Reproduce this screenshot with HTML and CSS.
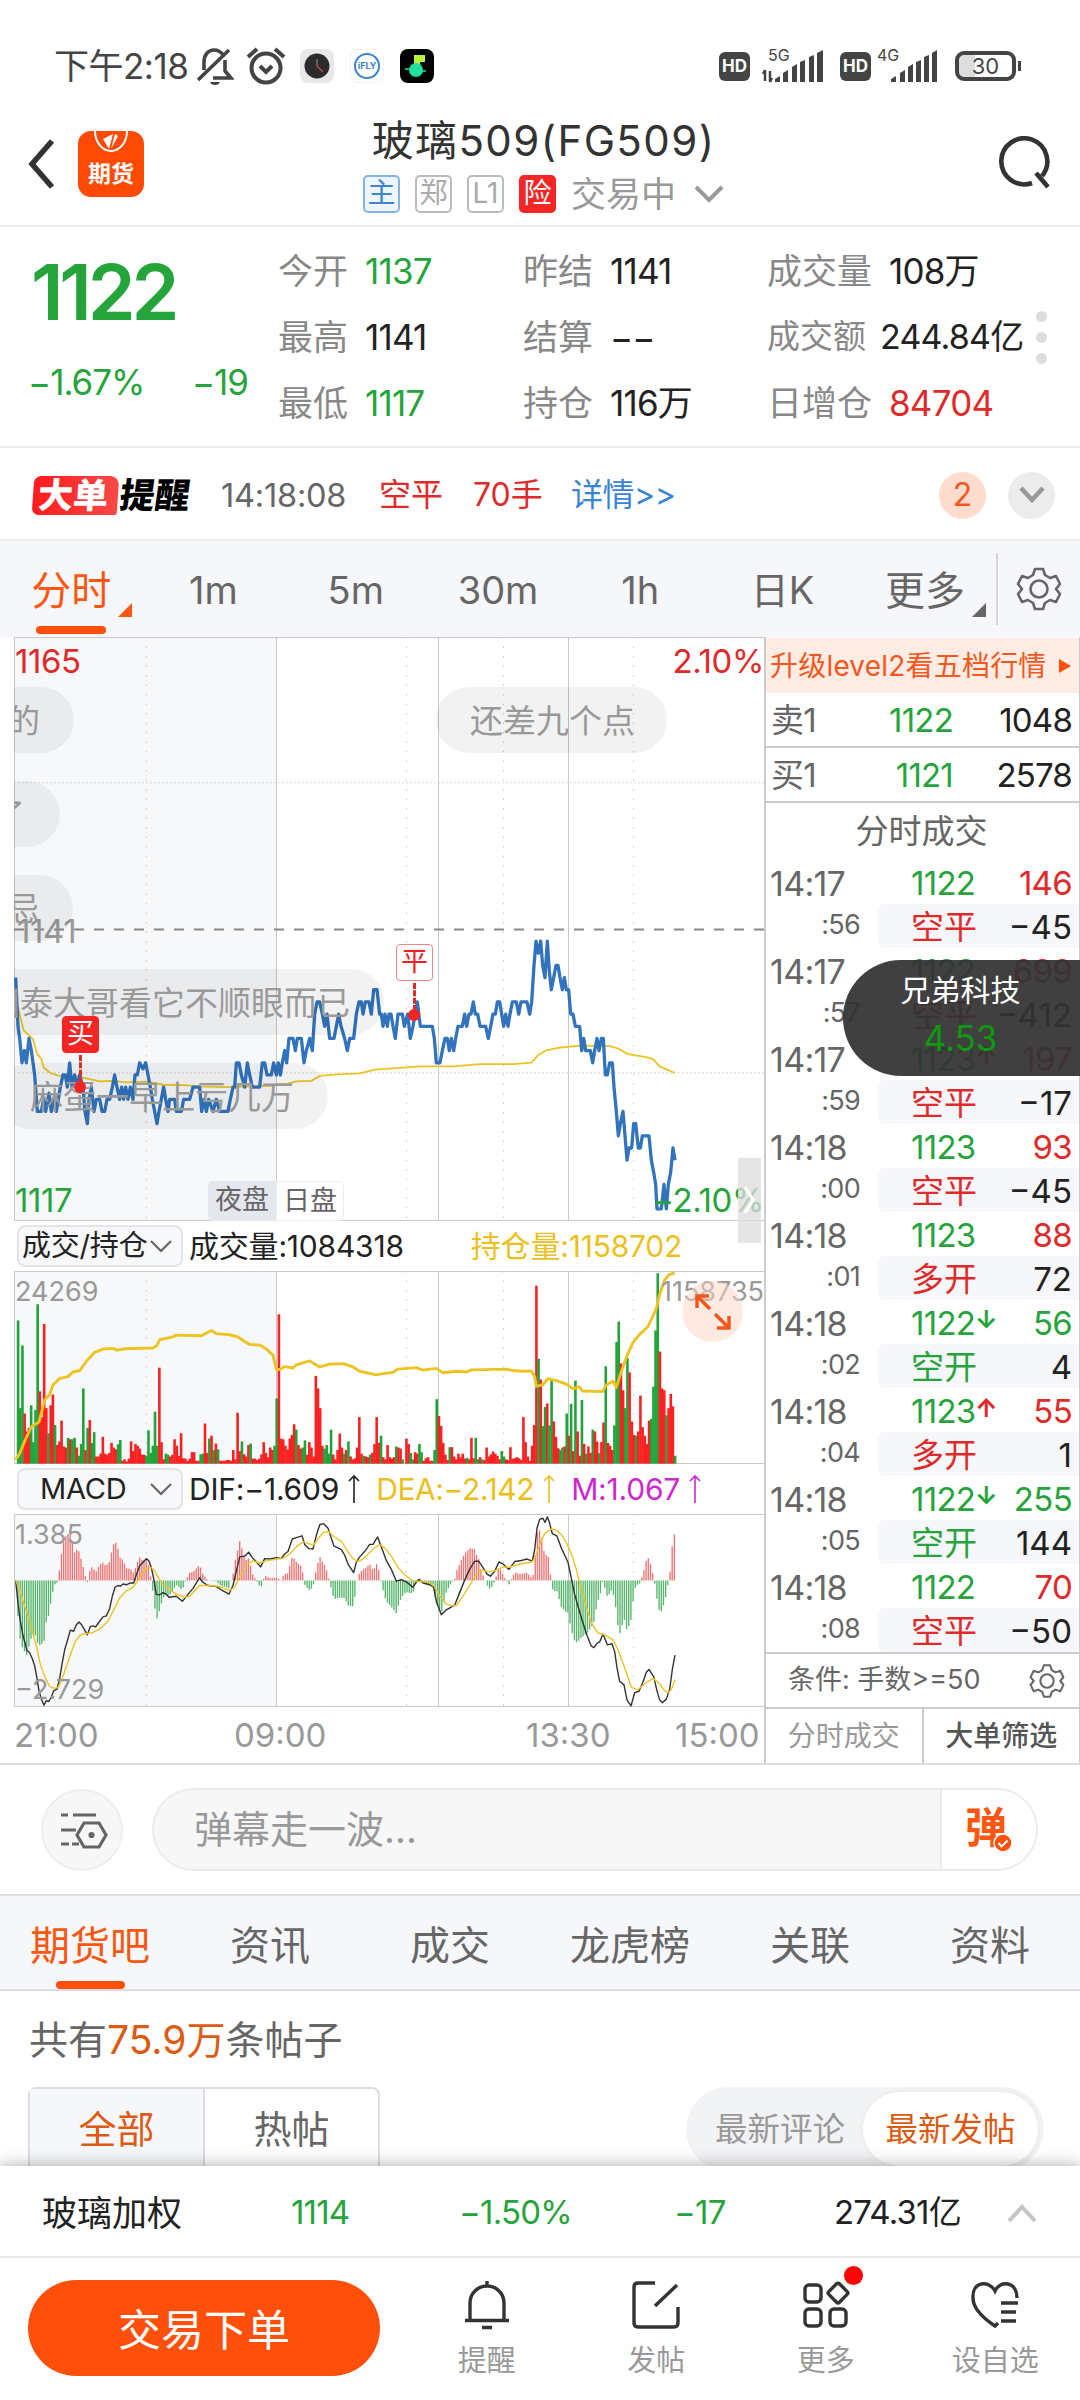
FILE: index.html
```html
<!DOCTYPE html>
<html lang="zh-CN">
<head>
    <meta charset="utf-8">
    <title>玻璃509(FG509)</title>
    <link rel="stylesheet" href="styles.css">
</head>
<body>
    <div class="status">
        <span class="clock">下午2:18</span>
        <svg class="s-bell" width="38" height="40" viewBox="0 0 38 40" fill="none" stroke="#444" stroke-width="3.600">
            <path d="M8 24V16C8 8 13 4 18 4c4 0 7 2 9 5M29 14v11l6 7H17M33 4L2 34"/>
            <path d="M14 36h10q-1 3-5 3t-5-3z" fill="#444" stroke="none"/>
        </svg>
        <svg class="s-alarm" width="40" height="40" viewBox="0 0 40 40" fill="none" stroke="#444" stroke-width="4">
            <circle cx="20" cy="22" r="14.500"/>
            <path d="M2 11l9-8M38 11l-9-8M14 20l6 6 6-6"/>
        </svg>
        <span class="app app-clock"><svg width="34" height="34" viewBox="0 0 34 34"><circle cx="17" cy="17" r="12.500" fill="#2b2b2b"/><path d="M17 10v7" stroke="#777" stroke-width="1.500"/><path d="M17 17l6 6" stroke="#d44" stroke-width="1.200"/></svg></span>
        <span class="app app-fly"><i>iFLY</i></span>
        <span class="app app-music"><svg width="34" height="34" viewBox="0 0 34 34"><path d="M14 16V6h11v7h-5l1 7z" fill="#b9f23a"/><circle cx="16" cy="21" r="7" fill="#1fe0a0"/><path d="M5 20h6M21 22h5" stroke="#1fe0a0" stroke-width="1.500"/></svg></span>
        <span class="grow"></span>
        <span class="hd">HD</span>
        <svg class="s-sig" width="68" height="40" viewBox="0 0 68 40" fill="#444">
            <text x="6" y="15" class="net">5G</text>
            <path d="M3 24v11M1 28l2-4M8 36V25M10 32l-2 4" stroke="#444" stroke-width="2.500" fill="none"/>
            <path d="M13 36v-3l5-3v6zM21 36v-9l5-3v12zM30 36V21l5-3v18zM38 36V16l5-2v22zM47 36V11l5-2v27zM55 36V7l6-3v32z"/>
        </svg>
        <span class="hd">HD</span>
        <svg class="s-sig2" width="64" height="40" viewBox="0 0 64 40" fill="#444">
            <text x="2" y="15" class="net">4G</text>
            <path d="M16 36v-3l5-3v6zM25 36v-9l5-3v12zM33 36V21l5-3v18zM41 36V16l5-2v22zM49 36V11l5-2v27zM57 36V7l5-3v32z"/>
        </svg>
        <span class="battery">30</span>
    </div>

    <div class="header">
        <svg class="back" width="28" height="50" viewBox="0 0 28 50" fill="none" stroke="#333" stroke-width="5.500"><path d="M25 2L5 25l20 23"/></svg>
        <div class="logo">
            <svg width="40" height="24" viewBox="0 0 40 24"><path d="M4 0a16 20 0 0 0 32 0" fill="none" stroke="#fff" stroke-width="2"/><path d="M12 8l10-5-4 15zM24 3l3 2-7 13z" fill="#fff"/></svg>
            <span>期货</span>
        </div>
        <div class="title">
            <h1>玻璃509(FG509)</h1>
            <div class="tags">
                <span class="tag blue">主</span><span class="tag">郑</span><span class="tag">L1</span><span class="tag risk">险</span>
                <span class="state">交易中</span>
                <svg width="30" height="18" viewBox="0 0 30 18" fill="none" stroke="#999" stroke-width="4"><path d="M2 2l13 13L28 2"/></svg>
            </div>
        </div>
        <svg class="search" width="56" height="56" viewBox="0 0 56 56" fill="none" stroke="#333" stroke-width="4.600"><path d="M35 47A23 23 0 1 1 45 40M39 37l12 14"/></svg>
    </div>

    <div class="quote">
        <div class="last">
            <div class="price">1122</div>
            <div class="change"><span>−1.67%</span><span>−19</span></div>
        </div>
        <div class="grid">
            <div><label>今开</label><b class="green">1137</b></div>
            <div><label>昨结</label><b>1141</b></div>
            <div><label>成交量</label><b>108万</b></div>
            <div><label>最高</label><b>1141</b></div>
            <div><label>结算</label><b class="dash">−−</b></div>
            <div class="tight"><label>成交额</label><b>244.84亿</b></div>
            <div><label>最低</label><b class="green">1117</b></div>
            <div><label>持仓</label><b>116万</b></div>
            <div><label>日增仓</label><b class="red wide">84704</b></div>
        </div>
        <div class="dots"><i></i><i></i><i></i></div>
    </div>

    <div class="alert">
        <div class="badge"><span>大单</span><em>提醒</em></div>
        <span class="time">14:18:08</span>
        <span class="red dir">空平</span>
        <span class="red lots">70手</span>
        <span class="more">详情&gt;&gt;</span>
        <span class="count">2</span>
        <span class="fold"><svg width="28" height="20" viewBox="0 0 28 20" fill="none" stroke="#999" stroke-width="4.500"><path d="M3 3l11 12L25 3"/></svg></span>
    </div>

    <div class="periods">
        <div class="period active">分时</div>
        <div class="period">1m</div>
        <div class="period">5m</div>
        <div class="period">30m</div>
        <div class="period">1h</div>
        <div class="period">日K</div>
        <div class="period menu">更多</div>
        <div class="setting">
            <svg class="gear" width="46" height="46" viewBox="0 0 46 46"><use href="#gear"/></svg>
        </div>
    </div>

    <div class="market">
        <div class="charts">
            <div class="plot main">
                <svg id="priceChart" viewBox="43 0 2250 1526" preserveAspectRatio="none"></svg>
                <span class="lbl tl red">1165</span>
                <span class="lbl tr red">2.10%</span>
                <span class="lbl mid">1141</span>
                <span class="lbl bl green">1117</span>
                <span class="lbl br green">−2.10%</span>
                <div class="bubble b1">的</div>
                <div class="bubble b2">了</div>
                <div class="bubble b3">忌</div>
                <div class="bubble b4">国泰大哥看它不顺眼而已</div>
                <div class="bubble b5">麻蛋一早上亏几万</div>
                <div class="bubble b6">还差九个点</div>
                <div class="mark buy">买</div>
                <div class="mark sell">平</div>
                <div class="session"><span>夜盘</span><span>日盘</span></div>
            </div>
            <div class="bar">
                <span class="select">成交/持仓<svg width="22" height="14" viewBox="0 0 22 14"><use href="#down"/></svg></span>
                <span class="v1">成交量:1084318</span>
                <span class="v2 yellow">持仓量:1158702</span>
            </div>
            <div class="plot sub">
                <svg id="volumeChart" viewBox="43 170 2250 539" preserveAspectRatio="none"></svg>
                <span class="lbl small tl">24269</span>
                <span class="lbl small tr">1158735</span>
                <div class="expand"><svg width="38" height="38" viewBox="0 0 38 38" fill="none" stroke="#f4571c" stroke-width="3.500"><path d="M16 16L3 3M3 15V3h12M21 21l14 14M35 23v12H23"/></svg></div>
            </div>
            <div class="bar macd">
                <span class="select">MACD<svg width="22" height="14" viewBox="0 0 22 14"><use href="#down"/></svg></span>
                <span class="v1">DIF:−1.609<svg width="12" height="30" viewBox="0 0 12 30"><use href="#up"/></svg></span>
                <span class="yellow">DEA:−2.142<svg width="12" height="30" viewBox="0 0 12 30"><use href="#up"/></svg></span>
                <span class="pink">M:1.067<svg width="12" height="30" viewBox="0 0 12 30"><use href="#up"/></svg></span>
            </div>
            <div class="plot sub">
                <svg id="macdChart" viewBox="43 850 2250 540" preserveAspectRatio="none"></svg>
                <span class="lbl small tl">1.385</span>
                <span class="lbl small bl">−2.729</span>
            </div>
            <div class="axis"><span>21:00</span><span>09:00</span><span>13:30</span><span>15:00</span></div>
            <div class="handle"><svg width="12" height="30" viewBox="0 0 12 30" fill="none" stroke="#fff" stroke-width="3"><path d="M2 2l8 13-8 13"/></svg></div>
        </div>

        <div class="book">
            <div class="upgrade">升级level2看五档行情<i></i></div>
            <div class="level"><span>卖1</span><span class="green">1122</span><span>1048</span></div>
            <div class="level"><span>买1</span><span class="green">1121</span><span>2578</span></div>
            <div class="caption">分时成交</div>
            <div id="trades"></div>
            <div class="filter">条件: 手数&gt;=50<svg width="36" height="36" viewBox="0 0 46 46"><use href="#gear"/></svg></div>
            <div class="switch"><span>分时成交</span><span>大单筛选</span></div>
            <div class="float"><span>兄弟科技</span><b>4.53</b></div>
        </div>
    </div>

    <div class="danmu">
        <div class="opts"><svg width="48" height="38" viewBox="0 0 48 38" fill="none" stroke="#666" stroke-width="3.200"><path d="M1 4h7M13 4h23M1 19h15M1 33h8M12 33h7M24 12h15l7 12-7 12H24l-7-12z"/><circle cx="31.500" cy="24" r="1.500"/></svg></div>
        <div class="input"><span>弹幕走一波...</span>
            <div class="send">弹<svg width="20" height="20" viewBox="0 0 20 20"><circle cx="10" cy="10" r="9" fill="#fe500b" stroke="#fff" stroke-width="1.500"/><path d="M5.500 10l3 3.500 6-6" stroke="#fff" stroke-width="2" fill="none"/></svg></div>
        </div>
    </div>

    <div class="sections">
        <div class="active">期货吧</div><div>资讯</div><div>成交</div><div>龙虎榜</div><div>关联</div><div>资料</div>
    </div>

    <div class="posts">
        <div class="total">共有<span>75.9万</span>条帖子</div>
        <div class="filters">
            <div class="tabs"><span class="on">全部</span><span>热帖</span></div>
            <div class="sort"><span>最新评论</span><span class="on">最新发帖</span></div>
        </div>
    </div>

    <div class="ticker">
        <span class="t1">玻璃加权</span>
        <span class="t2 green">1114</span>
        <span class="t3 green">−1.50%</span>
        <span class="t4 green">−17</span>
        <span class="t5">274.31亿</span>
        <svg width="30" height="20" viewBox="0 0 30 20" fill="none" stroke="#c4c4c4" stroke-width="4"><path d="M2 18L15 4l13 14"/></svg>
    </div>

    <div class="nav">
        <button>交易下单</button>
        <div class="item">
            <svg width="50" height="50" viewBox="0 0 50 50" fill="none" stroke="#333" stroke-width="3.400"><path d="M25 1v5M8 40V23a17 17 0 0 1 34 0v17M3 40.500h44M20 47.500h10"/></svg>
            <span>提醒</span>
        </div>
        <div class="item">
            <svg width="50" height="50" viewBox="0 0 50 50" fill="none" stroke="#333" stroke-width="3.400"><path d="M24 3H7q-4 0-4 4v36q0 4 4 4h36q4 0 4-4V27M24 26L46 5"/></svg>
            <span>发帖</span>
        </div>
        <div class="item">
            <svg width="50" height="50" viewBox="0 0 50 50" fill="none" stroke="#333" stroke-width="3.400"><rect x="4" y="5" width="16" height="17" rx="4"/><rect x="4" y="29" width="16" height="17" rx="4"/><rect x="29" y="29" width="16" height="17" rx="4"/><rect x="29.500" y="5.500" width="15" height="15" rx="2" transform="rotate(45 37 13)"/></svg>
            <span>更多</span>
            <i class="dot"></i>
        </div>
        <div class="item">
            <svg width="50" height="50" viewBox="0 0 50 50" fill="none" stroke="#333" stroke-width="3.400"><path d="M47 18C47 1 30 0 25 11 19 0 2 1 3 18c0 12 13 22 22 28l3-3M31 23h17M31 32h15M31 41h15"/></svg>
            <span>设自选</span>
        </div>
    </div>

    <svg class="defs" width="0" height="0">
        <symbol id="gear" viewBox="0 0 46 46"><path d="M19 3h8l2 6 5 3 6-2 4 8-4 5 4 5-4 8-6-2-5 3-2 6h-8l-2-6-5-3-6 2-4-8 4-5-4-5 4-8 6 2 5-3z" fill="none" stroke="#666" stroke-width="2.600" stroke-linejoin="round"/><circle cx="23" cy="23" r="8.500" fill="none" stroke="#666" stroke-width="2.600"/></symbol>
        <symbol id="down" viewBox="0 0 22 14"><path d="M1 2l10 10L21 2" fill="none" stroke="#666" stroke-width="2.200"/></symbol>
        <symbol id="up" viewBox="0 0 12 30"><path d="M6 29V2M1 7l5-5 5 5" fill="none" stroke="currentColor" stroke-width="1.600"/></symbol>
    </svg>
    <script src="chart.js"></script>
</body>
</html>
```
FILE: styles.css
```css
* {
    box-sizing: border-box;
}
body {
    margin: 0;
    width: 1080px;
    height: 2400px;
    overflow: hidden;
    background: #fff;
    color: #222;
    font-family: Inter, "Noto Sans CJK SC", sans-serif;
    font-size: 34px;
    line-height: 1.2;
    display: flex;
    flex-direction: column;
}
span, b, label, h1, em {
    white-space: nowrap;
}
i, em {
    font-style: normal;
}
b {
    font-weight: 400;
}
svg {
    display: block;
    flex: none;
}
.red { color: #e02a2a; }
.green { color: #26a43c; }
.yellow { color: #ecc01c; }
.pink { color: #cd28d0; }
.grow { flex: 1; }

/* status bar */
.status {
    flex: none;
    height: 102px;
    padding: 30px 64px 0 54px;
    display: flex;
    align-items: center;
    color: #444;
}
.clock {
    width: 142px;
    font-size: 35px;
    letter-spacing: -0.5px;
}
.s-alarm { margin-left: 12px; }
.app {
    width: 34px;
    height: 34px;
    border-radius: 8px;
    margin-left: 16px;
}
.s-alarm + .app { margin-left: 14px; }
.app-clock { background: #e8e8e8; }
.app-fly {
    border: 1px solid #f2f2f2;
    padding: 3px;
}
.app-fly i {
    display: block;
    width: 26px;
    height: 26px;
    border: 2px solid #3b82d6;
    border-radius: 50%;
    font: bold 9px/22px Inter, sans-serif;
    color: #3b82d6;
    text-align: center;
}
.app-music { background: #000; }
.hd {
    width: 31px;
    height: 29px;
    border-radius: 6px;
    background: #444;
    color: #fff;
    font: bold 17px/29px Inter, sans-serif;
    text-align: center;
}
.s-sig { margin: 0 10px 0 12px; }
.s-sig2 { margin: 0 16px 0 4px; }
.net {
    font: 16px Inter, sans-serif;
}
.battery {
    position: relative;
    width: 61px;
    height: 30px;
    border: 4px solid #444;
    border-radius: 9px;
    background: linear-gradient(90deg, #ddd 30%, #fff 30%);
    font-size: 22px;
    line-height: 22px;
    text-align: center;
}
.battery::after {
    content: "";
    position: absolute;
    right: -9px;
    top: 6px;
    width: 3px;
    height: 10px;
    background: #444;
}

/* header */
.header {
    flex: none;
    height: 125px;
    border-bottom: 2px solid #ececec;
    display: flex;
    align-items: center;
    padding: 0 27px;
}
.logo {
    width: 66px;
    height: 66px;
    margin-left: 23px;
    border-radius: 13px;
    background: #fe4a05;
    color: #fff;
    font-size: 23px;
    font-weight: 700;
    display: flex;
    flex-direction: column;
    align-items: center;
    line-height: 38px;
}
.title {
    flex: 1;
    display: flex;
    flex-direction: column;
    align-items: center;
    padding: 0 62px 10px 0;
    margin-left: 8px;
}
h1 {
    margin: 9px 0 7px;
    font-size: 42px;
    font-weight: 400;
    line-height: 54px;
    letter-spacing: 1.4px;
    color: #333;
}
.tags {
    display: flex;
    align-items: center;
    gap: 15px;
    height: 38px;
}
.tag {
    width: 37px;
    height: 38px;
    border: 2px solid #bbb;
    border-radius: 5px;
    color: #aaa;
    font-size: 28px;
    line-height: 33px;
    text-align: center;
}
.tag.blue {
    color: #4085d0;
    border-color: #82b4e8;
    background: #eef5fd;
}
.tag.risk {
    color: #fff;
    border-color: #f42525;
    background: #f42525;
}
.state {
    color: #999;
    font-size: 35px;
    line-height: 38px;
}
.tags svg { margin-left: 3px; }

/* quote */
.quote {
    flex: none;
    height: 221px;
    border-bottom: 2px solid #ececec;
    display: flex;
}
.last {
    width: 278px;
    padding: 24px 30px 0 28px;
    color: #26a43c;
}
.price {
    padding-left: 3px;
    font-size: 77px;
    font-weight: 600;
    line-height: 82px;
    letter-spacing: -4.2px;
}
.change {
    display: flex;
    justify-content: space-between;
    margin-top: 28px;
    font-size: 35px;
    line-height: 42px;
    letter-spacing: -1px;
}
.grid {
    display: grid;
    grid-template-columns: 245px 244px 265px;
    grid-template-rows: repeat(3, 66px);
    padding-top: 11px;
}
.grid div {
    display: flex;
    align-items: center;
}
.grid label {
    color: #888;
    font-size: 35px;
    margin-right: 17px;
}
.grid b {
    font-size: 35px;
    letter-spacing: -0.8px;
}
.grid .tight label { font-size: 33px; margin-right: 14px; }
.grid .tight b { font-size: 34px; }
.dots {
    display: flex;
    flex-direction: column;
    gap: 10px;
    padding-top: 84px;
    margin-left: 4px;
}
.dots i {
    width: 11px;
    height: 11px;
    border-radius: 50%;
    background: #ddd;
}

/* big order alert */
.alert {
    flex: none;
    height: 93px;
    border-bottom: 2px solid #ececec;
    display: flex;
    align-items: center;
    padding: 3px 25px 0 33px;
    font-size: 32px;
}
.badge {
    display: flex;
    align-items: center;
    width: 188px;
    font-weight: 900;
    line-height: 39px;
}
.badge span {
    width: 85px;
    padding-left: 5px;
    border-radius: 7px 9px 2px 7px;
    background: linear-gradient(90deg, #ff1c1c, #fb4848);
    color: #fff;
    font-size: 35px;
    transform: skewX(-4deg);
}
.badge em {
    margin-left: 2px;
    color: #000;
    font-size: 35px;
    transform: skewX(-8deg);
}
.time { width: 158px; color: #666; font-size: 33px; }
.time { letter-spacing: -0.2px; font-size: 32.500px; }
.dir { width: 94px; }
.lots { width: 98px; }
.more { flex: 1; color: #3a84d6; letter-spacing: -0.5px; }
.count, .fold {
    width: 47px;
    height: 47px;
    border-radius: 50%;
    background: #ececec;
    display: flex;
    align-items: center;
    justify-content: center;
}
.count {
    background: #ffdccd;
    color: #f4571c;
    margin-right: 22px;
}

/* periods */
.periods {
    flex: none;
    height: 96px;
    display: flex;
    background: #f6f7fa;
    color: #666;
    font-size: 38px;
}
.period {
    position: relative;
    width: 142.300px;
    line-height: 99px;
    text-align: center;
}
.period.active { color: #fb5711; font-size: 40px; }
.period.active::before {
    content: "";
    position: absolute;
    left: 36px;
    bottom: 3px;
    width: 70px;
    height: 8px;
    border-radius: 4px;
    background: #fe500b;
}
.period.active::after, .period.menu::after {
    content: "";
    position: absolute;
    right: 10px;
    bottom: 20px;
    border-left: 14px solid transparent;
    border-bottom: 14px solid currentColor;
}
.period.menu { font-size: 40px; }
.setting {
    flex: 1;
    margin: 12px 0;
    border-left: 2px solid #d5d5d8;
    display: flex;
    align-items: center;
    justify-content: center;
}

/* charts */
.market {
    flex: none;
    height: 1128px;
    display: flex;
    border-bottom: 2px solid #ddd;
}
.charts {
    position: relative;
    width: 764px;
    padding-left: 14px;
}
.plot {
    position: relative;
    overflow: hidden;
}
.plot > svg {
    width: 750px;
    height: 100%;
}
.plot line, .plot path { vector-effect: non-scaling-stroke; }
.plot .expand path { vector-effect: none; }
.main { height: 584px; }
.sub { height: 193px; }
.lbl {
    position: absolute;
    font-size: 33px;
    line-height: 36px;
    letter-spacing: -0.4px;
}
.lbl.small, .lbl.mid { color: #999; }
.lbl.small { font-size: 27px; line-height: 30px; letter-spacing: 0; }
.tl { left: 1px; top: 6px; }
.tr { right: 0; top: 6px; }
.bl { left: 1px; bottom: 2px; }
.br { right: 0; bottom: 2px; }
.mid { left: 3px; top: 276px; }
.main .bl, .main .br { bottom: 3px; }
.bubble {
    position: absolute;
    height: 66px;
    padding: 0 34px;
    border-radius: 33px;
    background: rgba(0, 0, 0, 0.05);
    color: #999;
    font-size: 33px;
    line-height: 68px;
    white-space: nowrap;
}
.b1 { right: 690px; top: 50px; }
.b2 { right: 704px; top: 144px; padding-right: 35px; }
.b3 { right: 691px; top: 238px; padding-right: 33px; }
.b4 { right: 380px; top: 332px; }
.b5 { right: 436px; top: 426px; }
.b6 { left: 422px; top: 50px; width: 231px; }
.mark {
    position: absolute;
    width: 37px;
    height: 37px;
    border: 1.500px solid #e88;
    border-radius: 4px;
    background: #fff;
    color: #ee2222;
    font-size: 27px;
    line-height: 33px;
    text-align: center;
}
.mark::before {
    content: "";
    position: absolute;
    left: 16px;
    top: 38px;
    height: 28px;
    border-left: 3px dashed #e02a2a;
}
.mark::after {
    content: "";
    position: absolute;
    left: 11px;
    top: 64px;
    width: 12px;
    height: 12px;
    border-radius: 50%;
    background: #f42525;
}
.buy {
    left: 48px;
    top: 379px;
    background: #f42525;
    border-color: #f42525;
    color: #fff;
}
.sell { left: 382px; top: 307px; }
.session {
    position: absolute;
    left: 194px;
    bottom: 0;
    display: flex;
    font-size: 27px;
    line-height: 38px;
    color: #666;
}
.session span {
    width: 68px;
    text-align: center;
    background: #e4e7ee;
    border-radius: 5px 0 0 5px;
}
.session span + span {
    background: #fff;
    border: 1px solid #eee;
    border-radius: 0 5px 5px 0;
}
.handle {
    position: absolute;
    left: 738px;
    top: 521px;
    width: 23px;
    height: 85px;
    padding: 27px 5px;
    background: rgba(220, 220, 220, 0.75);
}
.bar {
    height: 50px;
    display: flex;
    align-items: center;
    color: #222;
    font-size: 30px;
    letter-spacing: -0.2px;
}
.select {
    width: 166px;
    height: 42px;
    margin: 0 6px 0 3px;
    padding: 0 9px 0 3px;
    border: 2px solid #e3e4e8;
    border-radius: 8px;
    background: #f7f8fa;
    display: flex;
    align-items: center;
    justify-content: space-between;
    font-size: 29px;
    line-height: 38px;
}
.v2 { margin-left: 67px; }
.macd .select { padding-left: 21px; }
.macd span { display: flex; align-items: center; }
.macd span + span { margin-right: 16px; }
.macd span + span svg { margin-left: 9px; }
.macd .yellow { letter-spacing: -0.4px; }
.expand {
    position: absolute;
    left: 668px;
    top: 10px;
    width: 61px;
    height: 61px;
    padding: 12px;
    border-radius: 50%;
    background: rgba(255, 214, 196, 0.5);
}
.axis {
    height: 56px;
    display: flex;
    color: #999;
    font-size: 33px;
    line-height: 56px;
}
.axis span:nth-child(1) { width: 220px; }
.axis span:nth-child(2) { width: 292px; }
.axis span:nth-child(3) { width: 149px; }

/* order book */
.book {
    position: relative;
    width: 316px;
    border-left: 2px solid #ccc;
    border-right: 1px solid #ccc;
}
.upgrade {
    height: 55px;
    padding: 0 0 0 4px;
    margin-top: 1px;
    background: #ffece4;
    color: #f4571c;
    font-size: 28px;
    line-height: 54px;
    letter-spacing: 0.2px;
    display: flex;
    align-items: center;
    white-space: nowrap;
}
.upgrade i {
    margin-left: 12px;
    border: 7px solid transparent;
    border-left: 12px solid #fe500b;
    border-right: 0;
}
.level {
    height: 55px;
    border-bottom: 2px solid #ccc;
    display: grid;
    grid-template-columns: 90px 92px 1fr;
    align-items: center;
    padding: 2px 7px 0 5px;
    font-size: 33px;
    letter-spacing: -0.8px;
}
.level span { text-align: right; }
.level span:first-child { text-align: left; color: #666; }
.caption {
    height: 57px;
    padding-right: 2px;
    line-height: 56px;
    text-align: center;
    color: #666;
    font-size: 33px;
}
.trade {
    display: grid;
    grid-template-columns: 112px 95px 1fr;
    grid-template-rows: 44px 44px;
    align-items: center;
    padding-left: 4px;
    font-size: 33px;
    letter-spacing: -0.7px;
}
.trade .hm { color: #666; padding-top: 4px; font-size: 34px; }
.trade .px { padding: 4px 0 0 29px; position: relative; }
.trade .px small { font-size: 25px; font-weight: 700; letter-spacing: 0; position: absolute; left: 93px; top: 5px; }
.trade .qty { text-align: right; padding: 4px 7px 0 0; }
.trade .ss {
    color: #666;
    font-size: 27px;
    line-height: 30px;
    text-align: right;
    padding: 0 22px 2px 0;
}
.trade .box {
    grid-column: 2 / 4;
    height: 44px;
    border-radius: 7px 0 0 7px;
    background: #f6f7fa;
    display: flex;
    align-items: center;
    justify-content: space-between;
    padding: 3px 7px 0 33px;
    margin-left: -4px;
    letter-spacing: 0;
}
.filter {
    height: 55px;
    border-top: 2px solid #ccc;
    display: flex;
    align-items: center;
    justify-content: space-between;
    padding: 0 14px 0 22px;
    color: #666;
    font-size: 27px;
}
.switch {
    height: 56px;
    display: flex;
    border-top: 2px solid #ccc;
    font-size: 28px;
    line-height: 55px;
    text-align: center;
    color: #999;
}
.switch span { flex: 1; }
.switch span + span {
    border-left: 2px solid #ccc;
    color: #555;
    font-weight: 500;
}
.float {
    position: absolute;
    left: 77px;
    top: 323px;
    width: 238px;
    height: 116px;
    border-radius: 58px 0 0 58px;
    background: rgba(50, 50, 50, 0.93);
    color: #fff;
    font-size: 30px;
    display: flex;
    flex-direction: column;
    align-items: center;
    line-height: 48px;
    padding: 6px 3px 0 0;
}
.float b {
    color: #0e9a0e;
    font-size: 35px;
}

/* comments bar */
.danmu {
    flex: none;
    height: 131px;
    display: flex;
    align-items: center;
    padding: 0 42px 0 41px;
    border-bottom: 2px solid #ddd;
}
.opts {
    width: 82px;
    height: 82px;
    margin-right: 29px;
    border: 2px solid #eee;
    border-radius: 50%;
    background: #f7f7f7;
    display: flex;
    align-items: center;
    justify-content: center;
}
.opts svg { margin-left: 4px; }
.input {
    flex: 1;
    height: 83px;
    border: 2px solid #ebebeb;
    border-radius: 42px;
    background: #f7f7f7;
    color: #999;
    font-size: 38px;
    overflow: hidden;
    display: flex;
    align-items: center;
    justify-content: space-between;
    padding-left: 40px;
}
.send {
    position: relative;
    width: 96px;
    height: 80px;
    border-left: 2px solid #ebebeb;
    background: #fff;
    color: #fb5711;
    font-size: 42px;
    font-weight: 600;
    line-height: 76px;
    padding-left: 23px;
}
.send svg {
    position: absolute;
    left: 51px;
    top: 43px;
}

/* sections */
.sections {
    flex: none;
    height: 95px;
    display: flex;
    background: #f6f7fa;
    border-bottom: 2px solid #ddd;
    color: #666;
    font-size: 40px;
    line-height: 100px;
    text-align: center;
}
.sections div {
    flex: 1;
    position: relative;
}
.sections .active { color: #fb5711; }
.sections .active::after {
    content: "";
    position: absolute;
    left: 56px;
    bottom: 0;
    width: 69px;
    height: 8px;
    border-radius: 4px;
    background: #fe500b;
}

/* posts */
.posts {
    flex: none;
    height: 175px;
    overflow: hidden;
    padding: 26px 36px 0 28px;
}
.total {
    color: #666;
    font-size: 39px;
    line-height: 46px;
    padding-left: 1px;
}
.total span { color: #dd5a12; }
.filters {
    display: flex;
    justify-content: space-between;
    margin-top: 24px;
}
.tabs {
    width: 352px;
    height: 88px;
    border: 2px solid #dcdde0;
    border-radius: 8px;
    display: flex;
    font-size: 38px;
    line-height: 81px;
    text-align: center;
    color: #666;
}
.tabs span { flex: 1; }
.tabs .on {
    background: #f6f7fa;
    border-right: 2px solid #dcdde0;
    color: #dd5a12;
}
.sort {
    width: 358px;
    height: 84px;
    border-radius: 42px;
    background: #f2f3f5;
    display: flex;
    align-items: center;
    padding: 0 6px 0 29px;
    color: #999;
    font-size: 32.500px;
}
.sort .on {
    width: 175px;
    height: 74px;
    margin-left: auto;
    border-radius: 37px;
    background: #fff;
    box-shadow: 0 0 6px rgba(0, 0, 0, 0.06);
    color: #dd5a12;
    line-height: 75px;
    text-align: center;
}

/* bottom quote */
.ticker {
    flex: none;
    height: 92px;
    border-bottom: 2px solid #e8e8e8;
    display: flex;
    align-items: center;
    padding: 3px 0 0 42px;
    background: #fff;
    font-size: 33px;
    letter-spacing: -0.8px;
    position: relative;
    box-shadow: 0 -2px 14px rgba(0, 0, 0, 0.28);
}
.t1 { width: 249px; font-size: 35px; letter-spacing: 0; }
.t2 { width: 168px; }
.t3 { width: 215px; }
.t4 { width: 160px; }
.t5 { width: 173px; }

/* bottom nav */
.nav {
    flex: none;
    height: 142px;
    display: flex;
    padding: 22px 0 0 28px;
    background: #fff;
    position: relative;
}
.nav button {
    width: 352px;
    height: 96px;
    margin-right: 22px;
    border: 0;
    border-radius: 48px;
    background: #fe500b;
    color: #fff;
    font: 43px "Noto Sans CJK SC", sans-serif;
    padding: 0 0 3px;
}
.item {
    position: relative;
    width: 169.500px;
    display: flex;
    flex-direction: column;
    align-items: center;
    color: #999;
    font-size: 29px;
}
.item span { margin-top: 14px; }
.dot {
    position: absolute;
    left: 103px;
    top: -14px;
    width: 19px;
    height: 19px;
    border-radius: 50%;
    background: #fb0505;
}
.defs { position: absolute; }
```
FILE: chart.js
```js
const RED = '#f92222', GREEN = '#22a33a', BLUE = '#3173bd', GOLD = '#edc324';
const STEP = 6.52;

// time,price pairs of the last traded price; second block starts at 1140
const price1 = '48,1137 55,1133 60,1132 67,1130 74,1131 80,1130 88,1132 95,1131 105,1129 113,1126 125,1126 132,1127 138,1126 148,1127.5 155,1126 162,1127 170,1126 176,1127 182,1128 190,1129 197,1129 203,1128 210,1130 217,1128 225,1129 232,1128 240,1129 250,1128 256,1126 263,1125 268,1127 275,1128 283,1126 290,1127 300,1127 307,1126 315,1126 322,1127 330,1127 338,1128 345,1129 352,1128 360,1127 366,1128 372,1127 378,1128 385,1127 392,1128 400,1127 406,1129 413,1129 420,1130 430,1129.5 438,1130 445,1129 452,1128 458,1127 465,1126 472,1125 478,1126 485,1127 492,1128 498,1127 505,1126 510,1127 525,1127 530,1126 545,1126 552,1127 570,1127 580,1128 600,1128 606,1126 613,1127 620,1126 627,1127 640,1126 650,1127 660,1126 685,1126 692,1127 700,1128 705,1128 710,1130 718,1130 725,1129 735,1128 743,1130 750,1129 758,1128 780,1128 788,1130 795,1130 802,1129 815,1129 822,1130 830,1129 836,1130 842,1129 848,1130 855,1131 861,1130 868,1132 880,1132 887,1131 893,1132 905,1132 913,1130 920,1131 930,1132 938,1131 945,1134 952,1135 960,1135 968,1134 975,1133 982,1134 990,1132 1003,1132 1010,1133 1017,1134 1024,1133 1035,1132 1043,1131 1050,1132 1062,1132 1070,1134 1078,1135 1085,1135 1090,1134 1097,1135 1108,1135 1115,1134 1122,1136 1132,1136';
const price2 = '0,1134 5,1134 10,1133 16,1134 23,1133 28,1134 34,1134 40,1133 47,1132 55,1134 63,1134 68,1134 74,1133 84,1134 92,1132 100,1133 106,1134 113,1135 122,1133 158,1133 164,1132 170,1130 181,1130 188,1131 196,1132 203,1132 209,1131 215,1132 222,1131 228,1132 235,1133 248,1133 255,1134 261,1133 268,1134 274,1134 281,1135 287,1134 294,1134 301,1133 318,1133 326,1132 333,1133 340,1134 347,1134 353,1135 360,1135 366,1134 372,1133 378,1134 385,1133 391,1134 398,1135 410,1135 417,1134 424,1135 442,1135 450,1134 456,1135 463,1138 469,1140 476,1139 483,1140 489,1138 496,1137 503,1140 509,1137.5 515,1136 522,1137 529,1138 535,1138 541,1137 548,1136 554,1137 560,1136 567,1136 573,1134 580,1134 587,1133 600,1133 606,1131 612,1132 618,1131 632,1131 639,1130 645,1131 652,1132 658,1131 665,1132 671,1132 677,1129 683,1129 690,1130 698,1130 703,1128 710,1126 716,1124 722,1125 730,1126 736,1124 742,1122 748,1123 756,1123 762,1125 768,1125 776,1123 782,1123 788,1124 808,1124 815,1122 822,1121 828,1120 832,1118 845,1118 853,1120 860,1118 866,1120 873,1121 880,1123 886,1122';
const avg1 = '55,985 72,1045 100,1068 112,1105 125,1120 132,1142 150,1155 175,1163 235,1166 270,1172 300,1178 340,1177 380,1181 440,1179 490,1187 550,1188 600,1191 680,1193 820,1190 832,1186 865,1184 890,1178 935,1177 960,1164 1010,1160 1080,1157 1130,1147';
const avg2 = '0,1147 60,1143 120,1139 220,1139 300,1133 400,1133 455,1129 475,1110 500,1097 530,1091 600,1085 690,1086 712,1091 745,1107 800,1115 820,1120 840,1139 885,1156';

// volume per minute, negative for a falling minute
const vol1 = [-400,-155,-330,140,90,100,-163,-60,-150,-445,202,130,390,155,-85,163,193,-108,52,62,120,48,45,-72,68,-68,-72,45,-22,-55,-210,38,-100,122,-58,-88,20,20,28,75,28,25,30,58,45,40,-54,-66,8,12,6,14,62,35,55,50,42,25,25,-22,-93,-30,-50,-145,-50,268,60,12,-28,-25,20,25,68,50,22,85,15,14,8,14,32,32,8,8,-26,-28,112,30,-70,78,-38,56,-40,8,8,8,10,10,8,38,12,142,35,-62,26,20,52,-56,14,14,10,14,26,60,30,18,45,38,-50,-182,417,70,68,50,40,70,80,110,-95,52,42,-45,-65,25,60,45,20,245,210,155,50,-42,-52,-28,-95,25,12,38,84,45,-28,38,-62,20,12,15,45,130,28,-22,20,18,-25,30,55,130,58,-78,18,12,52,18,14,18,-48,45,42,-12];
const vol2 = [70,55,-30,-12,32,28,-55,-32,8,15,18,8,8,-38,-180,133,105,58,25,10,-46,46,20,12,28,18,28,14,-16,12,72,15,-72,-12,18,-12,10,45,20,26,34,28,22,12,-35,-20,12,10,46,14,15,18,15,10,130,60,20,8,50,108,497,-293,235,-105,-158,168,-107,-235,118,75,43,-38,-45,48,-140,78,-167,35,-232,90,22,-178,55,-28,48,30,-95,90,62,-30,60,115,-272,58,50,38,-107,-340,-397,280,205,-155,-295,255,118,80,-78,90,190,102,78,55,120,-125,-215,-372,-532,313,210,205,-135,155,195,160,-22];
const oi1 = '48,697 60,680 75,645 95,605 118,592 135,530 150,515 160,488 180,470 205,465 220,452 240,448 262,420 285,397 310,388 340,386 352,391 375,387 460,385 472,378 480,362 520,354 530,349 605,351 635,336 650,345 690,348 715,354 730,364 750,375 780,377 800,388 820,405 830,445 840,445 855,437 880,441 890,432 930,421 945,430 960,438 990,430 1030,429 1060,438 1080,450 1130,460';
const oi2 = '0,458 40,453 55,444 110,440 130,447 170,442 190,454 230,450 260,452 275,446 380,444 400,448 430,450 455,449 465,465 470,492 490,487 505,471 530,476 560,486 580,499 598,493 608,505 668,507 680,488 700,478 710,495 725,450 745,400 760,370 780,347 805,325 830,275 840,235 855,195 868,180 885,176';

const dif1 = '48,1036 55,1100 62,1150 70,1190 82,1232 90,1238 98,1255 105,1275 112,1310 118,1345 124,1365 133,1385 140,1372 147,1375 155,1362 162,1345 172,1340 180,1310 188,1265 195,1230 203,1205 212,1175 222,1178 230,1160 238,1152 246,1160 255,1175 263,1188 272,1165 280,1163 288,1166 296,1155 310,1138 320,1135 330,1115 338,1080 346,1055 355,1050 362,1052 370,1046 380,1048 392,1043 402,1043 410,1020 420,995 430,985 440,975 447,980 455,1000 463,1035 470,1075 480,1076 490,1070 500,1075 508,1083 530,1080 548,1094 565,1075 580,1058 600,1028 608,1040 625,1050 650,1053 665,1062 688,1074 700,1050 710,1010 720,970 735,968 747,957 758,972 768,982 783,998 795,975 810,976 830,972 845,974 855,962 865,955 878,920 890,916 907,911 915,935 928,947 940,948 950,910 960,880 972,877 985,890 1003,940 1015,945 1025,950 1035,965 1045,990 1062,1014 1070,985 1080,970 1095,955 1110,935 1120,935 1134,914';
const dif2 = '0,930 12,960 20,980 35,1005 50,1038 65,1034 80,1040 100,1055 110,1040 118,1033 130,1043 150,1048 162,1055 170,1095 185,1132 200,1118 225,1105 240,1070 255,1035 270,1005 285,982 297,982 310,1000 322,1018 332,1024 345,1010 358,984 370,990 388,1005 405,983 425,980 442,976 458,982 465,950 472,890 480,865 490,862 496,874 503,858 508,870 518,905 532,912 545,945 565,985 575,1030 585,1075 597,1115 610,1155 622,1190 635,1220 643,1224 652,1212 660,1208 670,1186 683,1216 697,1213 705,1235 712,1280 720,1318 733,1328 742,1370 754,1387 765,1350 778,1346 790,1320 800,1293 808,1285 822,1305 832,1345 840,1370 848,1378 860,1368 870,1340 878,1285 886,1245';
const dea1 = '48,1036 60,1060 72,1100 85,1135 100,1185 112,1225 122,1270 135,1305 150,1332 165,1338 175,1335 185,1318 195,1290 210,1250 225,1210 240,1190 255,1185 275,1183 300,1172 325,1150 340,1122 360,1085 380,1065 400,1055 415,1035 430,1012 445,1001 455,1000 465,1010 480,1035 500,1056 530,1074 555,1083 570,1080 590,1060 600,1050 625,1050 660,1053 690,1064 705,1055 720,1025 740,992 760,981 780,987 800,981 830,976 850,974 870,962 890,942 910,928 925,932 940,938 955,920 970,902 987,899 1005,915 1025,926 1045,955 1060,975 1075,983 1090,976 1110,958 1125,945';
const dea2 = '0,936 15,945 35,968 55,1000 75,1020 100,1037 120,1038 150,1042 165,1052 180,1080 200,1102 215,1107 230,1106 250,1080 270,1050 290,1018 305,1006 325,1012 345,1009 370,998 390,999 420,990 455,985 465,975 480,935 495,905 515,892 530,895 545,908 560,930 575,960 590,1005 605,1060 620,1110 635,1155 655,1183 675,1188 700,1202 715,1230 735,1280 755,1335 775,1342 795,1325 820,1310 840,1325 855,1345 868,1350 878,1335 886,1314';

function join(a, b) {
    const parse = (s, dx) => s.split(' ').map(p => p.split(',').map(Number)).map(([x, y]) => [x + dx, y]);
    return parse(a, 0).concat(parse(b, 1140));
}

function path(points, color, width) {
    return `<path d="M${points.map(p => p.join(' ')).join('L')}" fill="none" stroke="${color}" stroke-width="${width}" stroke-linejoin="round"/>`;
}

function line(x1, y1, x2, y2, extra = '') {
    return `<line x1="${x1}" y1="${y1}" x2="${x2}" y2="${y2}" stroke="#c8c8c8" stroke-width="1" ${extra}/>`;
}

// night session shading, frame and session separators
function grid(top, bottom) {
    let s = `<rect x="43" y="${top}" width="787" height="${bottom - top}" fill="#f6f8fa"/>`;
    [44.5, 830.5, 1316.5, 1706.5].forEach(x => s += line(x, top, x, bottom));
    [440.5, 1220.5, 1511.5, 1901.5].forEach(x => s += line(x, top, x, bottom, 'stroke-dasharray="1.5 8"'));
    return s + line(43, top + 1.5, 2293, top + 1.5) + line(43, bottom - 1.5, 2293, bottom - 1.5);
}

function valueAt(points, x) {
    for (let i = 1; i < points.length; i++) {
        const [x0, y0] = points[i - 1], [x1, y1] = points[i];
        if (x <= x1) return y0 + (y1 - y0) * (x - x0) / (x1 - x0);
    }
    return points[points.length - 1][1];
}

// price
const prices = join(price1, price2).map(([x, p]) => [x, 1526 - (p - 1117) * 31.8]);
const avg = join(avg1, avg2).map(([x, y]) => [x, y - 17]);
document.getElementById('priceChart').innerHTML = grid(0, 1526)
    + line(43, 381, 2293, 381, 'stroke-dasharray="1.5 2.5"')
    + line(43, 1139, 2293, 1139, 'stroke-dasharray="1.5 2.5"')
    + '<line x1="43" y1="764" x2="2293" y2="764" stroke="#888" stroke-width="2" stroke-dasharray="10 10"/>'
    + path(avg, GOLD, 1.8) + path(prices, BLUE, 3.3);

// volume and open interest
function volumeBars(list, x0, step) {
    return list.map((v, i) => {
        const h = Math.abs(v);
        return `<rect x="${x0 + i * step - 3.6}" y="${708 - h}" width="7.8" height="${h}" fill="${v > 0 ? RED : GREEN}"/>`;
    }).join('');
}
document.getElementById('volumeChart').innerHTML = grid(170, 709)
    + volumeBars(vol1, 55, STEP) + volumeBars(vol2, 1220, 6.5)
    + path(join(oi1, oi2), GOLD, 2.9);

// macd
const dif = join(dif1, dif2), dea = join(dea1, dea2);
let hist = '';
for (let x = 55; x <= 2027; x += STEP) {
    const h = 2 * (valueAt(dea, x) - valueAt(dif, x));
    const y = h > 0 ? 1036 - h : 1036;
    hist += `<rect x="${x - 2}" y="${y}" width="4" height="${Math.abs(h)}" fill="${h > 0 ? '#ee7272' : '#55b56a'}"/>`;
}
document.getElementById('macdChart').innerHTML = grid(850, 1390) + hist
    + path(dif, '#333', 1.4) + path(dea, GOLD, 1.4);

// trades: time, second, price, arrow, lots, lots colour, kind, kind colour, change
const trades = [
    ['14:17', '56', '1122', '', '146', 'red', '空平', 'red', '−45'],
    ['14:17', '57', '1122', '', '699', 'red', '空平', 'red', '−412'],
    ['14:17', '59', '1123', '↑', '197', 'red', '空平', 'red', '−17'],
    ['14:18', '00', '1123', '', '93', 'red', '空平', 'red', '−45'],
    ['14:18', '01', '1123', '', '88', 'red', '多开', 'red', '72'],
    ['14:18', '02', '1122', '↓', '56', 'green', '空开', 'green', '4'],
    ['14:18', '04', '1123', '↑', '55', 'red', '多开', 'red', '1'],
    ['14:18', '05', '1122', '↓', '255', 'green', '空开', 'green', '144'],
    ['14:18', '08', '1122', '', '70', 'red', '空平', 'red', '−50']
];
document.getElementById('trades').innerHTML = trades.map(t => `
    <div class="trade">
        <span class="hm">${t[0]}</span>
        <span class="px green">${t[2]}<small class="${t[3] === '↑' ? 'red' : 'green'}">${t[3]}</small></span>
        <span class="qty ${t[5]}">${t[4]}</span>
        <span class="ss">:${t[1]}</span>
        <div class="box"><span class="${t[7]}">${t[6]}</span><span>${t[8]}</span></div>
    </div>`).join('');
```
